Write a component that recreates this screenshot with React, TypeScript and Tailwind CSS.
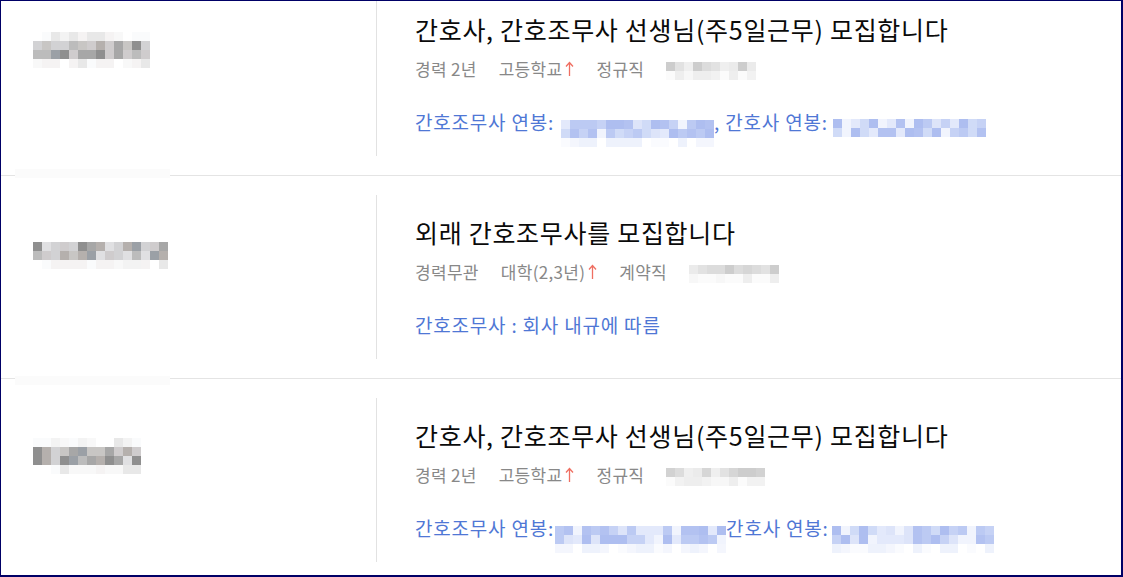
import type { ReactNode } from 'react';

const FONT = "font-['Noto_Sans_CJK_KR','Noto_Sans',sans-serif]";

// 블러 처리된 영역 (모자이크)
const rand = (seed: number) => {
  let s = seed;
  return () => {
    s = (s * 9301 + 49297) % 233280;
    return s / 233280;
  };
};

const GREY = ['#a7a7a7', '#b5b0ad', '#c8c6c4', '#8f8f8f', '#d2d2d4', '#bcbcbc', '#9ba0a6', '#cfcccd', '#e0e0e2'];
const GREY_EDGE = ['#f3f3f3', '#e8e8e8', '#f8f8f8', '#ffffff', '#f5f3f3', '#fafbfc'];
const LIGHT = ['#d6d6d6', '#e2e2e2', '#cdcdcd', '#ebebeb', '#dcdcdc', '#d2d2d2', '#efefef'];
const LIGHT_EDGE = ['#f2f2f2', '#f7f7f7', '#eeeeee', '#fbfbfb'];
const BLUE = ['#e3e9fb', '#d0dbf7', '#bccaf3', '#aebef0', '#f1f4fd', '#c6d2f5', '#dde4f9', '#b3c2f1'];
const BLUE_EDGE = ['#f4f6fd', '#fafbfe', '#ffffff', '#eef2fc'];

interface MosaicProps {
  cols: number;
  rows: number;
  palette: string[];
  edge: string[];
  seed: number;
  edgeTop?: boolean;
  edgeBottom?: boolean;
}

const Mosaic = ({ cols, rows, palette, edge, seed, edgeTop, edgeBottom }: MosaicProps) => {
  const r = rand(seed);
  const grid: string[][] = [];
  for (let y = 0; y < rows; y++) {
    const isEdge = (edgeTop && y === 0) || (edgeBottom && y === rows - 1);
    const pal = isEdge ? edge : palette;
    grid.push(Array.from({ length: cols }, () => pal[Math.floor(r() * pal.length)]));
  }
  return (
    <div className="inline-flex flex-col shrink-0">
      {grid.map((row, i) => (
        <div key={i} className="flex">
          {row.map((c, j) => (
            <div key={j} className="w-[9px] h-[9px]" style={{ backgroundColor: c }} />
          ))}
        </div>
      ))}
    </div>
  );
};

interface Job {
  logoPad: string;
  logo: ReactNode;
  title: string;
  career: string;
  edu: string;
  type: string;
  metaBlur: ReactNode;
  salary: ReactNode;
}

const UpArrow = () => (
  <svg width="9" height="16" viewBox="0 0 9 16" className="ml-[3px] mt-[4px]">
    <path d="M4.5 15V2M1 5.5L4.5 1.5L8 5.5" stroke="#ef6f62" strokeWidth="1.3" fill="none" />
  </svg>
);

const jobs: Job[] = [
  {
    logoPad: 'pt-[30px]',
    logo: <Mosaic cols={13} rows={4} palette={GREY} edge={GREY_EDGE} seed={11} edgeTop edgeBottom />,
    title: '간호사, 간호조무사 선생님(주5일근무) 모집합니다',
    career: '경력 2년',
    edu: '고등학교',
    type: '정규직',
    metaBlur: <Mosaic cols={10} rows={2} palette={LIGHT} edge={LIGHT_EDGE} seed={3} edgeBottom />,
    salary: (
      <>
        <span>간호조무사 연봉:</span>
        <span className="ml-[7px] -mt-[1px]">
          <Mosaic cols={17} rows={3} palette={BLUE} edge={BLUE_EDGE} seed={21} edgeBottom />
        </span>
        <span>, 간호사 연봉:</span>
        <span className="ml-[5px] -mt-[2px]">
          <Mosaic cols={17} rows={2} palette={BLUE} edge={BLUE_EDGE} seed={7} />
        </span>
      </>
    ),
  },
  {
    logoPad: 'pt-[37px]',
    logo: <Mosaic cols={15} rows={3} palette={GREY} edge={GREY_EDGE} seed={5} edgeBottom />,
    title: '외래 간호조무사를 모집합니다',
    career: '경력무관',
    edu: '대학(2,3년)',
    type: '계약직',
    metaBlur: <Mosaic cols={10} rows={2} palette={LIGHT} edge={LIGHT_EDGE} seed={9} edgeBottom />,
    salary: <span>간호조무사 : 회사 내규에 따름</span>,
  },
  {
    logoPad: 'pt-[30px]',
    logo: <Mosaic cols={12} rows={4} palette={GREY} edge={GREY_EDGE} seed={17} edgeTop edgeBottom />,
    title: '간호사, 간호조무사 선생님(주5일근무) 모집합니다',
    career: '경력 2년',
    edu: '고등학교',
    type: '정규직',
    metaBlur: <Mosaic cols={11} rows={2} palette={LIGHT} edge={LIGHT_EDGE} seed={13} edgeBottom />,
    salary: (
      <>
        <span>간호조무사 연봉:</span>
        <span className="ml-[1px] -mt-[1px]">
          <Mosaic cols={19} rows={3} palette={BLUE} edge={BLUE_EDGE} seed={29} edgeBottom />
        </span>
        <span>간호사 연봉:</span>
        <span className="ml-[3px] -mt-[1px]">
          <Mosaic cols={18} rows={3} palette={BLUE} edge={BLUE_EDGE} seed={31} edgeBottom />
        </span>
      </>
    ),
  },
];

const JobRow = ({ job, first }: { job: Job; first?: boolean }) => (
  <div className={`flex h-[203px] shrink-0 border-b border-[#e4e4e4] ${first ? '-mt-[28px]' : ''}`}>
    <div className="w-[376px] shrink-0 py-[19px]">
      <div className={`h-full border-r border-[#e2e2e2] pl-[32px] ${job.logoPad}`}>{job.logo}</div>
    </div>
    <div className="flex-1 pl-[38px] pt-[40px]">
      <h3 className="text-[25px] leading-[32px] text-[#0a0a0a] tracking-[0.7px]">{job.title}</h3>
      <div className="mt-[12px] flex items-center gap-[22px] h-[24px] text-[17px] leading-[24px] tracking-[0.3px] text-[#888888]">
        <span>{job.career}</span>
        <span className="flex items-start">
          {job.edu}
          <UpArrow />
        </span>
        <span>{job.type}</span>
        <span className="relative top-[2px] flex">{job.metaBlur}</span>
      </div>
      <div className="mt-[28px] flex items-start text-[19px] leading-[26px] tracking-[0.8px] text-[#4f77d5]">
        {job.salary}
      </div>
    </div>
  </div>
);

const App = () => {
  return (
    <div className={`${FONT} relative w-[1123px] h-[577px] overflow-hidden bg-white border-t border-l border-r-2 border-b-2 border-[#000066] flex flex-col`}>
      {jobs.map((job, i) => (
        <JobRow key={i} job={job} first={i === 0} />
      ))}
      {/* 흐릿한 가림 막대 */}
      <div className="absolute left-[14px] top-[168px] w-[155px] h-[9px] bg-[#fbfbfb]" />
      <div className="absolute left-[14px] top-[375px] w-[155px] h-[9px] bg-[#fbfbfb]" />
    </div>
  );
};

export default App;
